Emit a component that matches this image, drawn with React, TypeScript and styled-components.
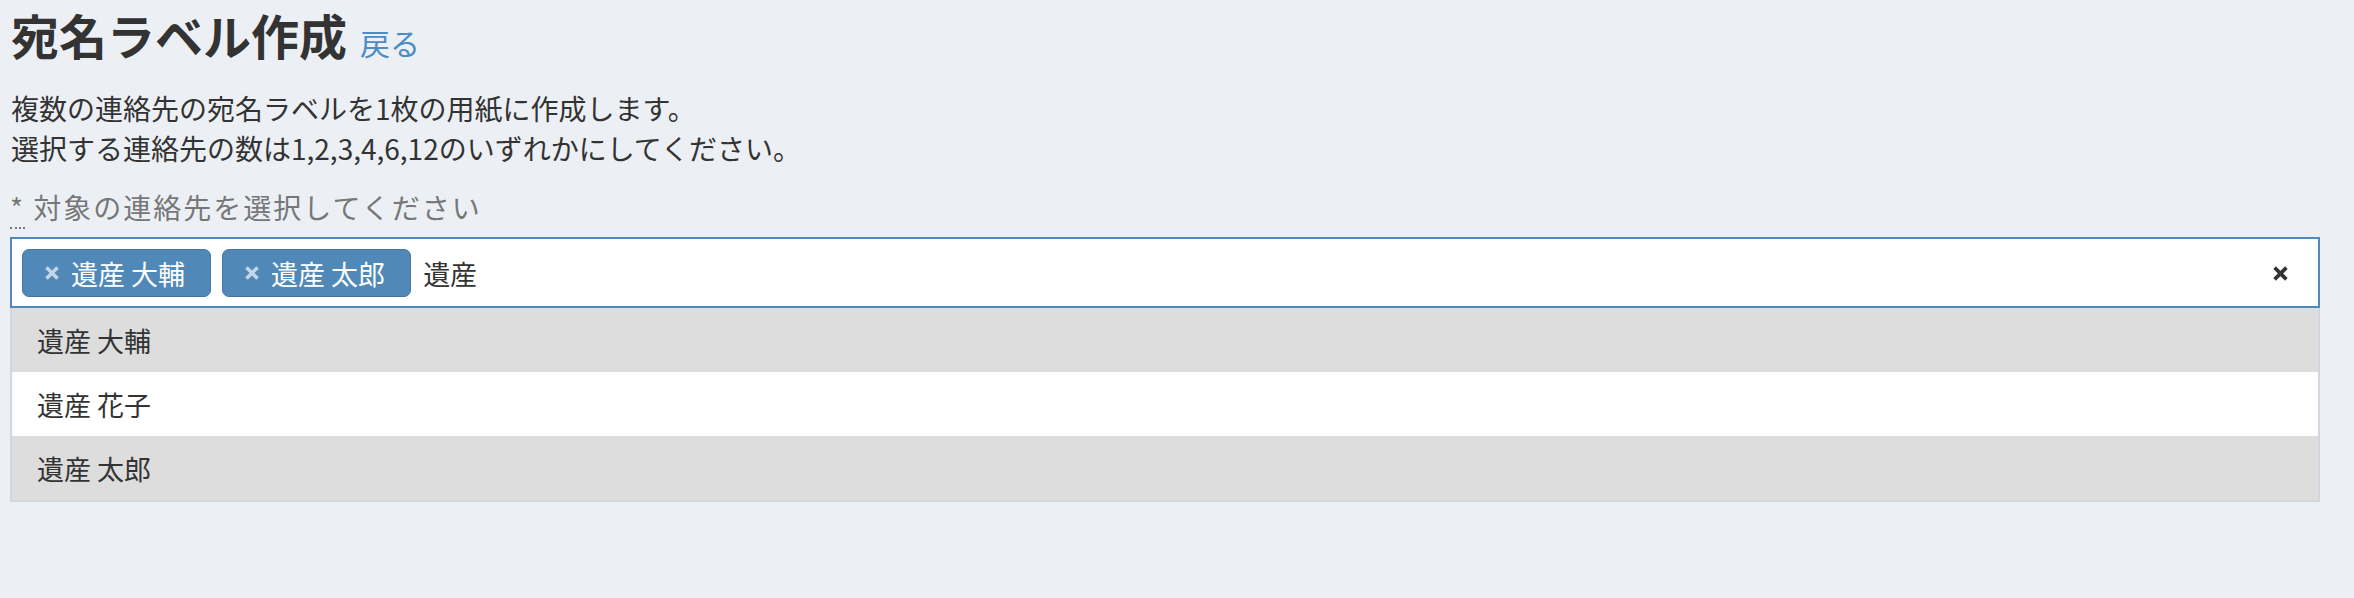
import styled, { createGlobalStyle } from "styled-components";

const GlobalStyle = createGlobalStyle`
    body {
        margin: 0;
        background: #ecf0f5;
        font-family: "Noto Sans CJK JP", "Noto Sans", sans-serif;
        color: #333;
    }
`;

const selected = ["遺産 大輔", "遺産 太郎"];

const options = [
    { id: 1, name: "遺産 大輔", selected: true },
    { id: 2, name: "遺産 花子", selected: false },
    { id: 3, name: "遺産 太郎", selected: true },
];

function Cross({ size, stroke, color }: { size: number; stroke: number; color: string }) {
    return (
        <svg width={size} height={size} viewBox="0 0 14 14">
            <path
                d="M1.5 1.5 L12.5 12.5 M12.5 1.5 L1.5 12.5"
                stroke={color}
                strokeWidth={stroke}
                strokeLinecap="butt"
            />
        </svg>
    );
}

export default function App() {
    return (
        <>
            <GlobalStyle />
            <Page>
                <TitleRow>
                    <Title>宛名ラベル作成</Title>
                    <BackLink href="#">戻る</BackLink>
                </TitleRow>

                <Description>
                    複数の連絡先の宛名ラベルを1枚の用紙に作成します。
                    <br />
                    選択する連絡先の数は1,2,3,4,6,12のいずれかにしてください。
                </Description>

                <FieldLabel>
                    <Required title="required">*</Required> 対象の連絡先を選択してください
                </FieldLabel>

                <SelectBox>
                    <Choices>
                        {selected.map((name) => (
                            <Tag key={name}>
                                <TagRemove>
                                    <Cross size={14} stroke={3.6} color="#c5d5e6" />
                                </TagRemove>
                                {name}
                            </Tag>
                        ))}
                        <SearchText>遺産</SearchText>
                    </Choices>
                    <ClearButton>
                        <Cross size={15} stroke={3.4} color="#333" />
                    </ClearButton>
                </SelectBox>

                <Dropdown>
                    {options.map((item) => (
                        <Option key={item.id} $selected={item.selected}>
                            {item.name}
                        </Option>
                    ))}
                </Dropdown>
            </Page>
        </>
    );
}

const Page = styled.div`
    padding: 6px 34px 0 10px;
`;

const TitleRow = styled.h1`
    display: flex;
    align-items: baseline;
    gap: 13px;
    margin: 0;
    line-height: 56px;
`;

const Title = styled.span`
    font-size: 48px;
    font-weight: 700;
    color: #333;
    padding-left: 1px;
`;

const BackLink = styled.a`
    font-size: 30px;
    font-weight: 400;
    color: #4a8cc6;
    text-decoration: none;
`;

const Description = styled.p`
    margin: 18px 0 0;
    font-size: 28px;
    line-height: 40px;
    padding-left: 1px;
`;

const FieldLabel = styled.div`
    margin-top: 19px;
    font-size: 28px;
    line-height: 40px;
    color: #777;
    letter-spacing: 2px;
`;

const Required = styled.abbr`
    text-decoration: none;
    border-bottom: 2px dotted #777;
    cursor: help;
`;

const SelectBox = styled.div`
    display: flex;
    align-items: center;
    margin-top: 10px;
    background: #fff;
    border: 2px solid #5089bb;
    padding: 10px 30px 9px 10px;
`;

const Choices = styled.div`
    flex: 1;
    display: flex;
    align-items: center;
    gap: 11px;
`;

const Tag = styled.div`
    display: flex;
    align-items: center;
    height: 48px;
    box-sizing: border-box;
    padding: 0 25px 0 22px;
    background: #5089b8;
    border: 1.5px solid #42749f;
    border-radius: 7px;
    color: #fff;
    font-size: 27px;
`;

const TagRemove = styled.span`
    display: flex;
    margin-right: 12px;
`;

const SearchText = styled.span`
    margin-left: 1px;
    font-size: 27px;
    color: #333;
`;

const ClearButton = styled.span`
    display: flex;
    cursor: pointer;
`;

const Dropdown = styled.ul`
    margin: 0;
    padding: 0;
    list-style: none;
    border: 2px solid #d2d6de;
    border-top: none;
`;

const Option = styled.li<{ $selected: boolean }>`
    height: 64px;
    display: flex;
    align-items: center;
    padding-left: 25px;
    font-size: 27px;
    color: #333;
    background: ${(p) => (p.$selected ? "#dddddd" : "#fff")};
`;
